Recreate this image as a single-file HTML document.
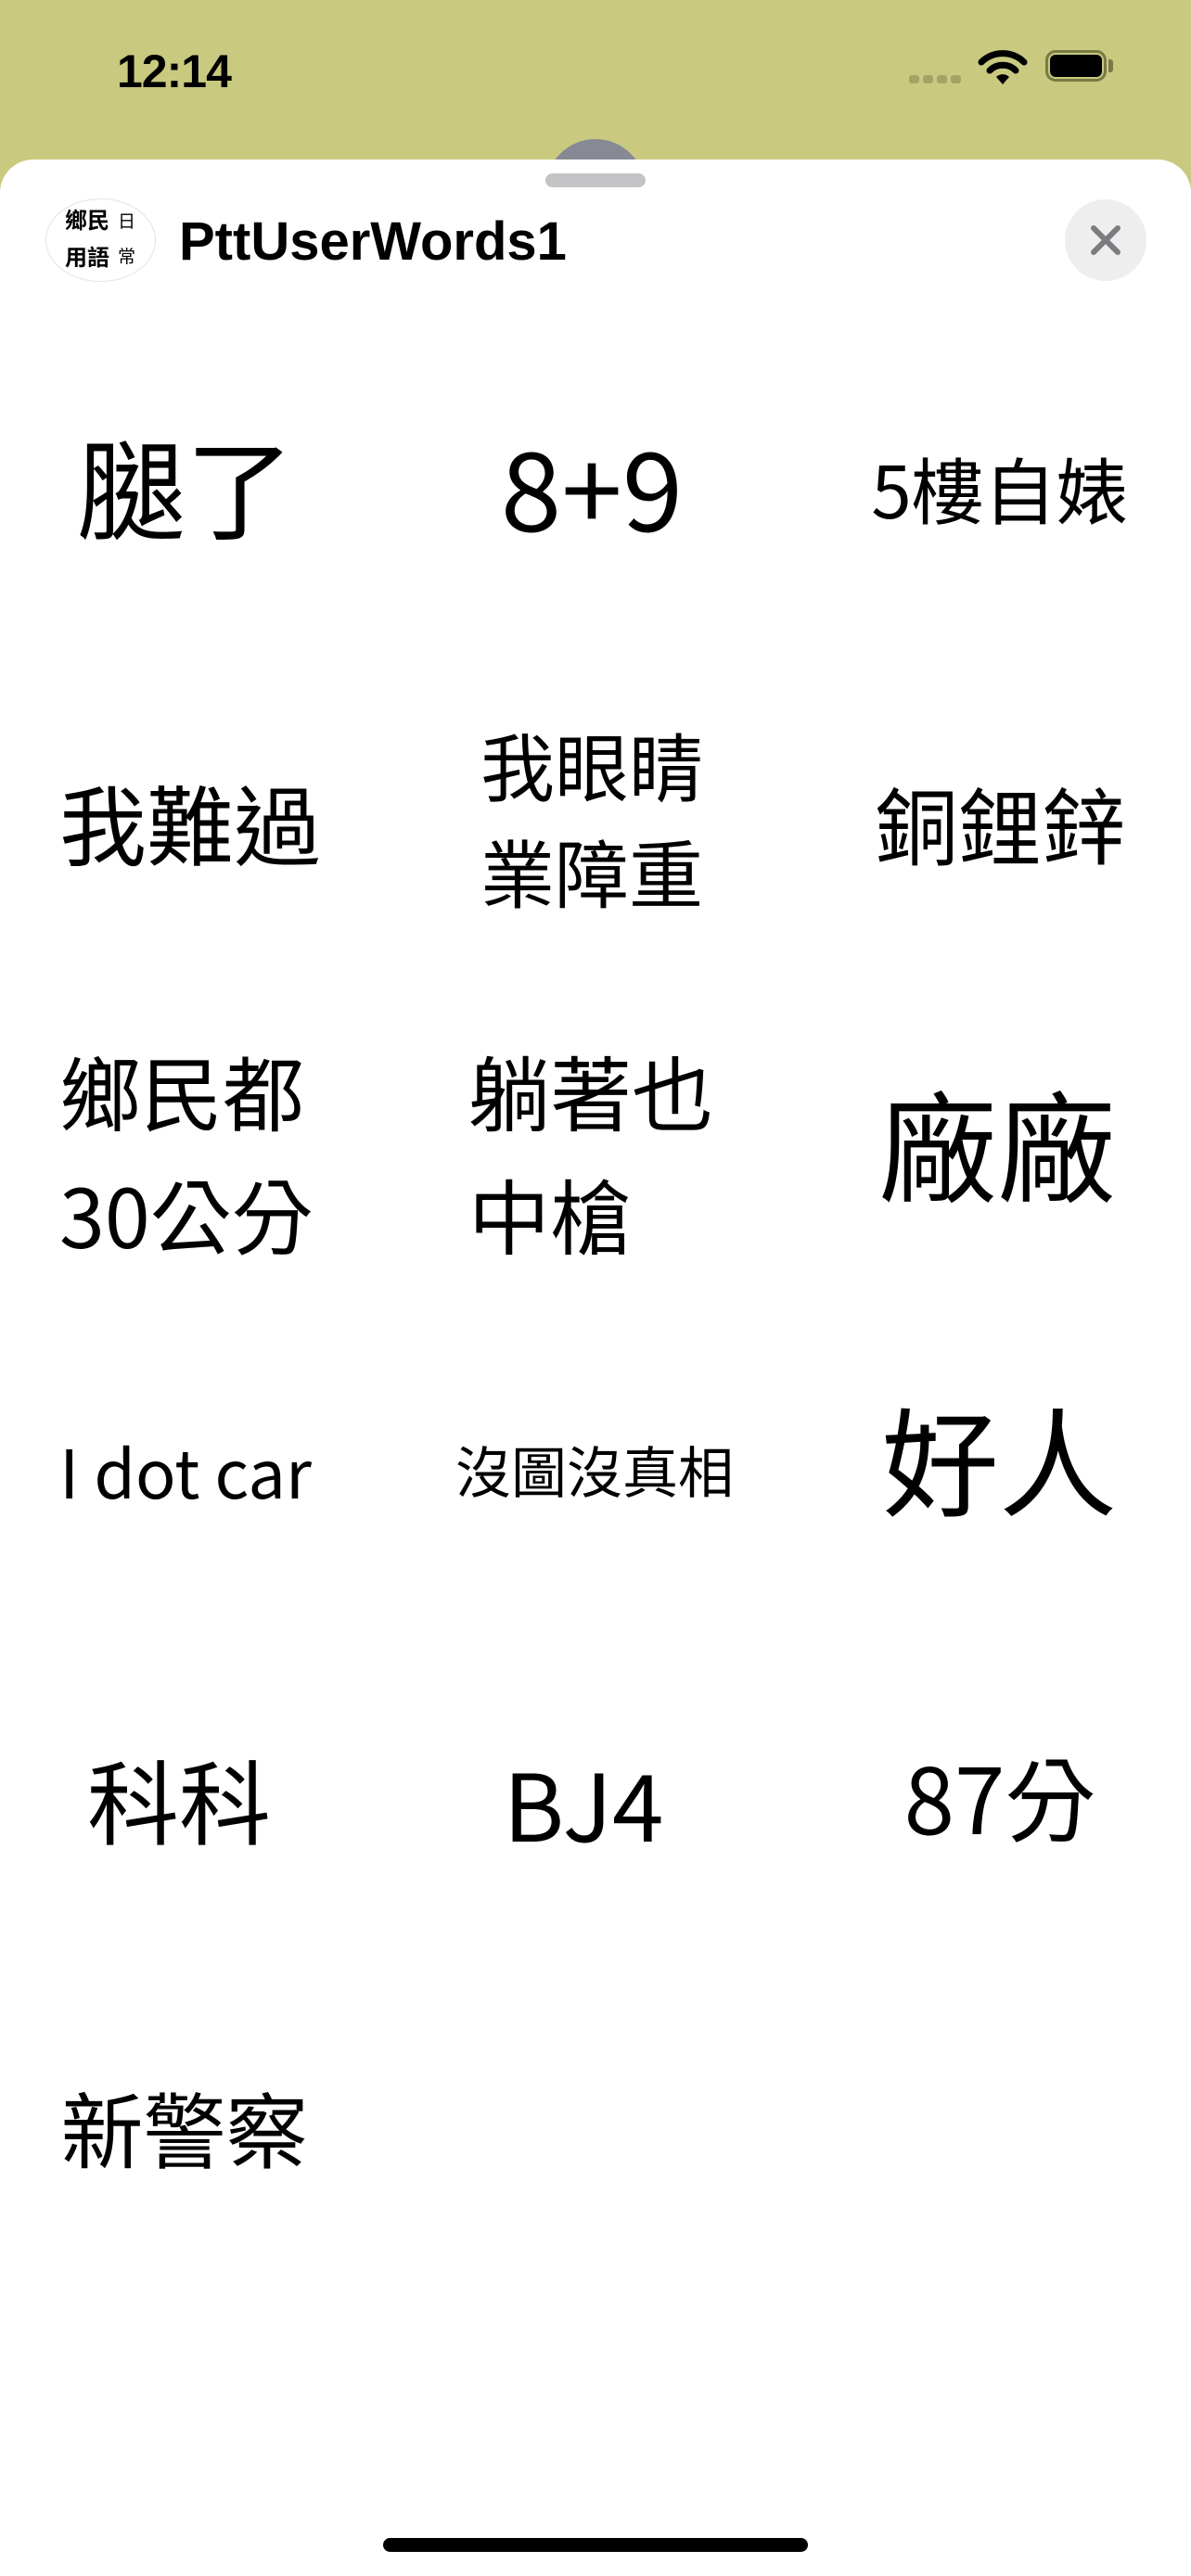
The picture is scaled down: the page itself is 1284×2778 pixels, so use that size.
<!DOCTYPE html>
<html><head><meta charset="utf-8"><style>
html,body{margin:0;padding:0}
body{width:1284px;height:2778px;position:relative;overflow:hidden;background:#c9ca80;font-family:"Liberation Sans","Noto Sans CJK TC",sans-serif}
.sheet{position:absolute;left:0;top:172px;width:1284px;height:2606px;background:#fff;border-radius:36px 36px 0 0}
.w{position:absolute;transform:translate(-50%,-50%);font-family:"Noto Sans CJK TC","Noto Sans CJK SC",sans-serif;color:#000;white-space:nowrap;line-height:1}
.l{position:absolute;font-family:"Noto Sans CJK TC",sans-serif;color:#000;white-space:nowrap;line-height:1}
</style></head><body>
<div style="position:absolute;left:126px;top:48px;font-size:50px;font-weight:bold;letter-spacing:-1px">12:14</div>
<div style="position:absolute;left:980px;top:81px;width:11px;height:9px;background:#a3a365;border-radius:3px"></div>
<div style="position:absolute;left:995px;top:81px;width:11px;height:9px;background:#a3a365;border-radius:3px"></div>
<div style="position:absolute;left:1010px;top:81px;width:11px;height:9px;background:#a3a365;border-radius:3px"></div>
<div style="position:absolute;left:1025px;top:81px;width:11px;height:9px;background:#a3a365;border-radius:3px"></div>
<svg style="position:absolute;left:1054px;top:52px" width="54" height="40" viewBox="0 0 54 40">
<path d="M4 15 A33 33 0 0 1 50 15" stroke="#000" stroke-width="7" fill="none" stroke-linecap="round"/>
<path d="M13 24 A20 20 0 0 1 41 24" stroke="#000" stroke-width="7" fill="none" stroke-linecap="round"/>
<path d="M20 31 L27 39 L34 31 A10 10 0 0 0 20 31Z" fill="#000"/>
</svg>
<div style="position:absolute;left:1127px;top:54px;width:66px;height:34px;border:3px solid #7a7a45;border-radius:11px;box-sizing:border-box"></div>
<div style="position:absolute;left:1132px;top:59px;width:56px;height:24px;background:#000;border-radius:6px"></div>
<div style="position:absolute;left:1195px;top:64px;width:5px;height:14px;background:#7a7a45;border-radius:0 3px 3px 0"></div>
<div style="position:absolute;left:588px;top:150px;width:108px;height:60px;background:#878a95;border-radius:54px 54px 0 0"></div>
<div class="sheet"></div>
<div style="position:absolute;left:588px;top:187px;width:108px;height:15px;background:#c4c4c6;border-radius:8px"></div>
<div style="position:absolute;left:49px;top:214px;width:119px;height:90px;border:1.5px solid #e3e3e3;border-radius:50%;box-sizing:border-box"></div>
<div class="l" style="left:70px;top:224px;font-size:24px;font-weight:bold">鄉民</div>
<div class="l" style="left:70px;top:264px;font-size:24px;font-weight:bold">用語</div>
<div class="l" style="left:127px;top:228px;font-size:19px">日</div>
<div class="l" style="left:127px;top:266px;font-size:19px">常</div>
<div style="position:absolute;left:193px;top:232px;font-size:58px;font-weight:bold;line-height:1;color:#000">PttUserWords1</div>
<div style="position:absolute;left:1148px;top:215px;width:88px;height:88px;border-radius:50%;background:#eeeeef"></div>
<svg style="position:absolute;left:1148px;top:215px" width="88" height="88"><path d="M31 31L57 57M57 31L31 57" stroke="#7b7b80" stroke-width="6" stroke-linecap="round"/></svg>

<div class="w" style="left:200px;top:522px;font-size:117px">腿了</div>
<div class="w" style="left:638px;top:522px;font-size:118px">8+9</div>
<div class="w" style="left:1078px;top:526px;font-size:78px">5樓自婊</div>

<div class="w" style="left:205px;top:886px;font-size:94px">我難過</div>
<div class="w" style="left:638px;top:824px;font-size:80px">我眼睛</div>
<div class="w" style="left:638px;top:939px;font-size:80px">業障重</div>
<div class="w" style="left:1078px;top:886px;font-size:90px">銅鋰鋅</div>

<div class="l" style="left:64px;top:1132px;font-size:88px">鄉民都</div>
<div class="l" style="left:64px;top:1265px;font-size:88px">30公分</div>
<div class="l" style="left:505px;top:1132px;font-size:88px">躺著也</div>
<div class="l" style="left:505px;top:1265px;font-size:88px">中槍</div>
<div class="w" style="left:1075px;top:1231px;font-size:128px">廠廠</div>

<div class="w" style="left:200px;top:1585px;font-size:72px">I dot car</div>
<div class="w" style="left:641px;top:1585px;font-size:60px">沒圖沒真相</div>
<div class="w" style="left:1077px;top:1571px;font-size:127px">好人</div>

<div class="w" style="left:193px;top:1939px;font-size:99px">科科</div>
<div class="w" style="left:629px;top:1943px;font-size:100px">BJ4</div>
<div class="w" style="left:1078px;top:1936px;font-size:98px">87分</div>

<div class="w" style="left:199px;top:2293px;font-size:89px">新警察</div>

<div style="position:absolute;left:413px;top:2737px;width:458px;height:15px;background:#000;border-radius:8px"></div>
</body></html>
